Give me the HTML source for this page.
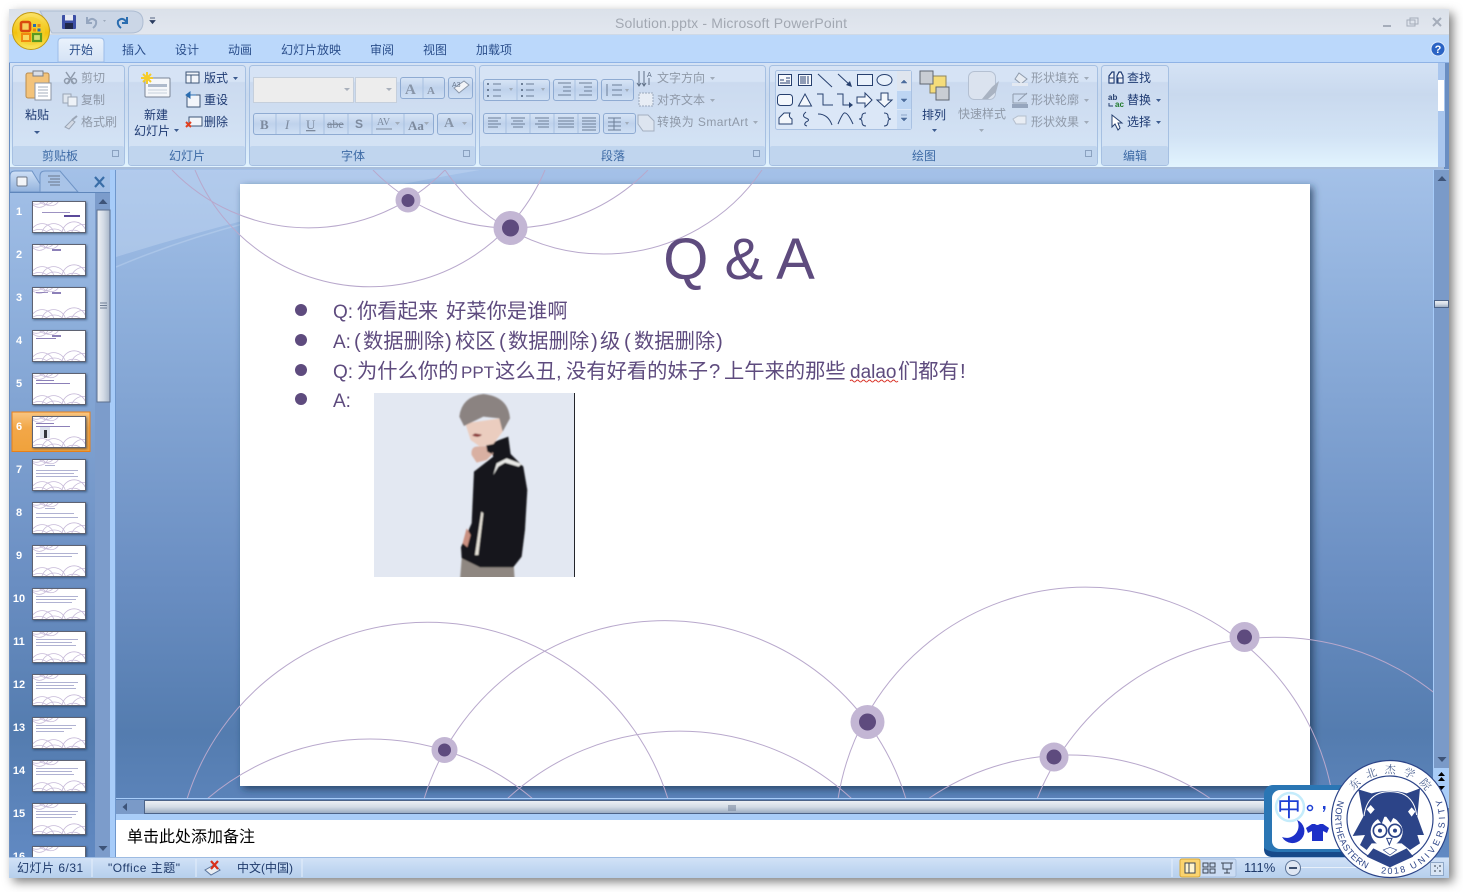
<!DOCTYPE html>
<html lang="zh"><head><meta charset="utf-8"><title>Solution.pptx - Microsoft PowerPoint</title>
<style>
html,body{margin:0;padding:0;width:1463px;height:892px;overflow:hidden;background:#fff}
svg{display:block}
text{font-family:"Liberation Sans","Noto Sans CJK SC",sans-serif;white-space:pre}
.d{font-size:12px;fill:#1e3a72}
.g{font-size:12px;fill:#8f99a8}
.l{font-size:12px;fill:#3d6aa5;text-anchor:middle}
.t{font-size:12px;fill:#2b4f8c}
.n{font-size:11px;font-weight:bold;fill:#fff;text-anchor:middle}
.s{font-size:20.300px;fill:#5e4b7e}
.st{font-size:12px;fill:#1f3a6b}
.arc{fill:none;stroke:#b8a8cc;stroke-width:1}
.sh{fill:none;stroke:#27406f;stroke-width:1}
</style></head><body>
<svg width="1463" height="892" viewBox="0 0 1463 892" xmlns="http://www.w3.org/2000/svg">
<defs>
<filter id="ws" x="-5%" y="-5%" width="110%" height="110%"><feDropShadow dx="4" dy="4" stdDeviation="5" flood-color="#000" flood-opacity=".5"/></filter>
<filter id="ss" x="-3%" y="-3%" width="106%" height="106%"><feDropShadow dx="3" dy="3" stdDeviation="4" flood-color="#1d3050" flood-opacity=".75"/></filter>
<filter id="ts" x="-10%" y="-10%" width="125%" height="125%"><feDropShadow dx="1" dy="1" stdDeviation="1" flood-color="#1d3050" flood-opacity=".6"/></filter>
<filter id="pb" x="-5%" y="-5%" width="110%" height="110%"><feGaussianBlur stdDeviation="2.500"/></filter>
<linearGradient id="tb" x1="0" y1="0" x2="0" y2="1"><stop offset="0" stop-color="#dbe1ea"/><stop offset="1" stop-color="#e2e7ef"/></linearGradient>
<linearGradient id="rb" x1="0" y1="0" x2="0" y2="1"><stop offset="0" stop-color="#d5e3f5"/><stop offset=".3" stop-color="#c9d9ee"/><stop offset=".7" stop-color="#d2e3f5"/><stop offset="1" stop-color="#e2f4fe"/></linearGradient>
<linearGradient id="gp" x1="0" y1="0" x2="0" y2="1"><stop offset="0" stop-color="#d6e3f5"/><stop offset=".16" stop-color="#d6e3f5"/><stop offset=".17" stop-color="#cbdaef"/><stop offset="1" stop-color="#d6e5f6"/></linearGradient>
<linearGradient id="tab" x1="0" y1="0" x2="0" y2="1"><stop offset="0" stop-color="#eaf2fc"/><stop offset="1" stop-color="#d5e3f5"/></linearGradient>
<linearGradient id="wk" x1="0" y1="0" x2="0" y2="1"><stop offset="0" stop-color="#a4c1e8"/><stop offset=".2" stop-color="#8fb0dc"/><stop offset=".6" stop-color="#6a8ec2"/><stop offset=".82" stop-color="#547caf"/><stop offset="1" stop-color="#6189c2"/></linearGradient>
<linearGradient id="sb" x1="0" y1="0" x2="0" y2="1"><stop offset="0" stop-color="#eef1f5"/><stop offset=".5" stop-color="#d3dbe5"/><stop offset="1" stop-color="#97a8bf"/></linearGradient>
<linearGradient id="sv" x1="0" y1="0" x2="1" y2="0"><stop offset="0" stop-color="#eef1f5"/><stop offset=".5" stop-color="#d3dbe5"/><stop offset="1" stop-color="#a7b6ca"/></linearGradient>
<linearGradient id="stb" x1="0" y1="0" x2="0" y2="1"><stop offset="0" stop-color="#d3e3f7"/><stop offset=".5" stop-color="#c3d8f2"/><stop offset="1" stop-color="#b6cfec"/></linearGradient>
<linearGradient id="or" x1="0" y1="0" x2="0" y2="1"><stop offset="0" stop-color="#f9c682"/><stop offset=".4" stop-color="#f2a748"/><stop offset="1" stop-color="#f0a23c"/></linearGradient>
<linearGradient id="btn" x1="0" y1="0" x2="0" y2="1"><stop offset="0" stop-color="#d8e5f6"/><stop offset=".5" stop-color="#bfd2ec"/><stop offset="1" stop-color="#d0e0f4"/></linearGradient>
<linearGradient id="gold" x1="0" y1="0" x2="0" y2="1"><stop offset="0" stop-color="#fbe36a"/><stop offset=".55" stop-color="#f2c20e"/><stop offset="1" stop-color="#fae65e"/></linearGradient>
<linearGradient id="tabl" x1="0" y1="0" x2="0" y2="1"><stop offset="0" stop-color="#cfe0f6"/><stop offset="1" stop-color="#93b3dd"/></linearGradient>
<clipPath id="wc"><rect x="116" y="170" width="1318" height="629"/></clipPath>
<clipPath id="pc"><rect x="9" y="192" width="86" height="665"/></clipPath>
<clipPath id="phc"><rect x="374" y="393" width="200" height="184"/></clipPath>
<symbol id="th" viewBox="0 0 1070 602">
<rect width="1070" height="602" fill="#fff"/>
<g fill="none" stroke="#c6b9d8" stroke-width="16">
<path d="M-60-14A190 190 0 0 0 205-14M-45-14A190 190 0 0 0 305-14M133-14A192 192 0 0 0 408-14M205-14A191 191 0 0 0 522-14"/>
<path d="M-53 615A252 252 0 0 1 428 615M184 615A252 252 0 0 1 666 615M-33 615A251 251 0 0 1 293 615M267 615A256 256 0 0 1 612 615M598 615A250 250 0 0 1 1093 615M797 615A256 256 0 0 1 1273 615M688 615A250 250 0 0 1 971 615"/>
</g>
</symbol>
</defs>

<!-- window -->
<rect x="9" y="9" width="1440" height="869" fill="#6a8ec2" filter="url(#ws)"/>
<!-- titlebar -->
<rect x="9" y="9" width="1440" height="26" fill="url(#tb)"/>
<rect x="9" y="34" width="1440" height="1" fill="#cfd9e6"/>
<rect x="9" y="35" width="1440" height="27" fill="#bbd8fb"/>
<rect x="9" y="62" width="1440" height="1" fill="#8fb3e6"/>
<!-- QAT -->
<path d="M40 11H131Q143 11 143 22T131 33H52Z" fill="#cbd6e6" stroke="#aebdd2"/>
<text x="615" y="28" textLength="232" lengthAdjust="spacing" style="font-size:14px;fill:#a2a8b2">Solution.pptx - Microsoft PowerPoint</text>
<!-- Office button -->
<circle cx="31" cy="31" r="18.500" fill="url(#gold)" stroke="#c39a12"/>
<circle cx="31" cy="31" r="14" fill="#f4cf30" opacity=".55"/>
<rect x="21" y="22" width="9" height="9" rx="1.500" fill="#f6d060" stroke="#d9480f" stroke-width="2.600"/>
<rect x="33" y="24" width="3" height="3" fill="#2a6db0"/><rect x="37.500" y="24" width="3" height="3" fill="#e68a10"/><rect x="33" y="28.500" width="3" height="3" fill="#e68a10"/><rect x="37.500" y="28.500" width="3" height="3" fill="#2a6db0"/>
<rect x="22" y="34" width="8" height="7" fill="#f8d860" stroke="#f08a10" stroke-width="2"/>
<rect x="33" y="34" width="8" height="7" fill="#cfe070" stroke="#5a9a20" stroke-width="2.200"/>
<!-- qat icons -->
<rect x="62" y="15" width="14" height="14" rx="1" fill="#3c4fa6"/><rect x="65" y="15" width="8" height="5.500" fill="#e7eaf2"/><rect x="65" y="23" width="8" height="6" fill="#20284a"/>
<path d="M87 17V23H92M87 23Q91 16 96 21Q97 25 93 28" fill="none" stroke="#95a6bf" stroke-width="2"/>
<path d="M103 20l3 0l-1.500 2z" fill="#9eabbd"/>
<path d="M127 17V23H122M127 23Q123 16 118 21Q117 25 121 28" fill="none" stroke="#2a6db0" stroke-width="2"/>
<path d="M150 18h5M150 20.500h5l-2.500 3z" fill="#2a3d60" stroke="#2a3d60" stroke-width=".8"/>
<!-- window buttons -->
<rect x="1383" y="25" width="8" height="2" fill="#a5adba"/>
<rect x="1407" y="20" width="8" height="6" fill="none" stroke="#a5adba"/><rect x="1410" y="18" width="8" height="6" fill="none" stroke="#a5adba"/>
<path d="M1433 18L1441 26M1441 18L1433 26" stroke="#a5adba" stroke-width="2"/>
<!-- tabs -->
<path d="M58 62V42Q58 38 62 38H100Q104 38 104 42V62Z" fill="url(#tab)" stroke="#9cbde8"/>
<text class="t" x="69" y="54">开始</text><text class="t" x="122" y="54">插入</text><text class="t" x="175" y="54">设计</text><text class="t" x="228" y="54">动画</text><text class="t" x="281" y="54">幻灯片放映</text><text class="t" x="370" y="54">审阅</text><text class="t" x="423" y="54">视图</text><text class="t" x="476" y="54">加载项</text>
<circle cx="1438" cy="49" r="7" fill="#2a63c4" stroke="#dce9fa"/><text x="1438" y="53" text-anchor="middle" style="font-size:11px;font-weight:bold;fill:#fff">?</text>

<!-- ribbon -->
<rect x="10" y="63" width="1434" height="105" fill="url(#rb)"/>
<rect x="10" y="167" width="1434" height="2" fill="#a9bedb"/>
<rect x="1438" y="63" width="7" height="104" fill="#a9c6ee"/><rect x="1438" y="80" width="6" height="31" fill="#fff"/>
<g fill="url(#gp)" stroke="#a6c0e2">
<rect x="12.500" y="65.500" width="112" height="100" rx="3"/>
<rect x="128.500" y="65.500" width="117" height="100" rx="3"/>
<rect x="249.500" y="65.500" width="226" height="100" rx="3"/>
<rect x="479.500" y="65.500" width="286" height="100" rx="3"/>
<rect x="769.500" y="65.500" width="328" height="100" rx="3"/>
<rect x="1101.500" y="65.500" width="67" height="100" rx="3"/>
</g>
<g fill="#c0d5ee">
<rect x="13" y="146" width="111" height="19" rx="2"/><rect x="129" y="146" width="116" height="19" rx="2"/><rect x="250" y="146" width="225" height="19" rx="2"/><rect x="480" y="146" width="285" height="19" rx="2"/><rect x="770" y="146" width="327" height="19" rx="2"/><rect x="1102" y="146" width="66" height="19" rx="2"/>
</g>
<text class="l" x="60" y="160">剪贴板</text><text class="l" x="187" y="160">幻灯片</text><text class="l" x="353" y="160">字体</text><text class="l" x="613" y="160">段落</text><text class="l" x="924" y="160">绘图</text><text class="l" x="1135" y="160">编辑</text>
<g fill="none" stroke="#8ba2c0"><rect x="112.500" y="150.500" width="6" height="6"/><rect x="463.500" y="150.500" width="6" height="6"/><rect x="753.500" y="150.500" width="6" height="6"/><rect x="1085.500" y="150.500" width="6" height="6"/></g>

<!-- clipboard -->
<rect x="26" y="73" width="23" height="25" rx="2" fill="#f3c37a" stroke="#b88c50"/>
<rect x="33" y="71" width="10" height="5" fill="#d9dee6" stroke="#7b7f88"/>
<path d="M35 83H51V100H35Z" fill="#fff" stroke="#8b95a5"/><path d="M38 87H48M38 90H48M38 93H48M38 96H48" stroke="#a6afbe"/>
<text class="d" x="25" y="119">粘贴</text><path d="M34 131h6l-3 3z" fill="#3c5b8f"/>
<path d="M66 72L74 84M75 72L67 84" stroke="#8f9bac" stroke-width="1.500"/><circle cx="67" cy="81" r="2.500" fill="none" stroke="#8f9bac" stroke-width="1.500"/><circle cx="74" cy="81" r="2.500" fill="none" stroke="#8f9bac" stroke-width="1.500"/>
<rect x="63" y="94" width="8" height="9" fill="#dfe6ef" stroke="#9aa5b5"/><rect x="68" y="97" width="9" height="9" fill="#eef2f7" stroke="#9aa5b5"/>
<path d="M65 127L72 120L75 122L69 129Z" fill="#d4dbe6" stroke="#9aa5b5"/><path d="M72 120L77 116" stroke="#9aa5b5" stroke-width="2"/>
<text class="g" x="81" y="82">剪切</text><text class="g" x="81" y="104">复制</text><text class="g" x="81" y="126">格式刷</text>
<!-- slides -->
<rect x="145" y="78" width="25" height="19" rx="1" fill="#f5f7fa" stroke="#7a8596"/><rect x="148" y="84" width="19" height="3" fill="#aebacb"/><path d="M148 90H167M148 93H167" stroke="#c7d0dc"/>
<path d="M147 72V84M141 78H153M143 74L151 82M151 74L143 82" stroke="#f5cc2a" stroke-width="2"/>
<text class="d" x="144" y="119">新建</text><text class="d" x="134" y="135">幻灯片</text><path d="M174 129h5l-2.500 3z" fill="#3c5b8f"/>
<rect x="186" y="72" width="13" height="11" fill="#f2f5fa" stroke="#3f5678"/><path d="M186 75H199M191 75V83" stroke="#3f5678"/>
<text class="d" x="204" y="82">版式</text><path d="M233 77h5l-2.500 3z" fill="#3c5b8f"/>
<rect x="187" y="95" width="13" height="12" fill="#f2f5fa" stroke="#3f5678"/><path d="M186 95L190 92V98ZM190 95H196" fill="#2a6db0" stroke="#2a6db0"/>
<text class="d" x="204" y="104">重设</text>
<rect x="189" y="117" width="13" height="9" fill="#f2f5fa" stroke="#3f5678"/><path d="M186 122L191 127M191 122L186 127" stroke="#e04020" stroke-width="2"/>
<text class="d" x="204" y="126">删除</text>
<!-- font -->
<rect x="253.500" y="77.500" width="100" height="25" fill="#ededed" stroke="#c5cfdc"/><rect x="355.500" y="77.500" width="41" height="25" fill="#ededed" stroke="#c5cfdc"/>
<path d="M344 88h6l-3 3zM386 88h6l-3 3z" fill="#a9b0bb"/>
<g fill="url(#btn)" stroke="#8fabd2"><rect x="400.500" y="77.500" width="44" height="21" rx="2.500"/><rect x="448.500" y="77.500" width="24" height="21" rx="2.500"/><rect x="253.500" y="113.500" width="180" height="21" rx="2.500"/><rect x="437.500" y="113.500" width="35" height="21" rx="2.500"/></g>
<path d="M423 78V98M276 114V134M300 114V134M324 114V134M348 114V134M372 114V134M404 114V134" stroke="#a8c0e0"/>
<text x="405" y="94" style="font-family:'Liberation Serif',serif;font-weight:bold;font-size:15px" fill="#8895a8">A</text><text x="427" y="94" style="font-family:'Liberation Serif',serif;font-weight:bold;font-size:11px" fill="#8895a8">A</text>
<text x="260" y="129" style="font-family:'Liberation Serif',serif;font-weight:bold;font-size:13px" fill="#7d8a9e">B</text><text x="285" y="129" style="font-family:'Liberation Serif',serif;font-style:italic;font-size:13px" fill="#7d8a9e">I</text><text x="306" y="129" style="font-family:'Liberation Serif',serif;font-size:13px;text-decoration:underline" fill="#7d8a9e">U</text><text x="327" y="128" style="font-family:'Liberation Serif',serif;font-size:12px;text-decoration:line-through" fill="#7d8a9e">abe</text><text x="355" y="128" style="font-family:'Liberation Sans',sans-serif;font-weight:bold;font-size:12px" fill="#7d8a9e">S</text><text x="377" y="125" style="font-family:'Liberation Serif',serif;font-size:10px" fill="#7d8a9e">AV</text><text x="408" y="130" style="font-family:'Liberation Serif',serif;font-weight:bold;font-size:13px" fill="#7d8a9e">Aa</text><text x="444" y="127" style="font-family:'Liberation Serif',serif;font-weight:bold;font-size:14px" fill="#8895a8">A</text>
<path d="M376 129H392" stroke="#7d8a9e"/><path d="M395 122h5l-2.500 3zM424 122h5l-2.500 3zM462 122h5l-2.500 3z" fill="#a0abb9"/>
<path d="M454 88L464 81L469 85L459 93Z" fill="#f2f4f8" stroke="#8a97aa"/>
<text x="452" y="87" style="font-size:7px" fill="#6b7a90">A3</text>
<!-- paragraph -->
<g fill="url(#btn)" stroke="#8fabd2"><rect x="483.500" y="79.500" width="66" height="21" rx="2.500"/><rect x="553.500" y="79.500" width="44" height="21" rx="2.500"/><rect x="601.500" y="79.500" width="32" height="21" rx="2.500"/><rect x="483.500" y="113.500" width="116" height="20" rx="2.500"/><rect x="603.500" y="113.500" width="32" height="20" rx="2.500"/></g>
<path d="M517 80V100M575 80V100M506 114V133M530 114V133M554 114V133M578 114V133" stroke="#a8c0e0"/>
<g stroke="#6c7e97" fill="none">
<path d="M493 84H501M493 90H501M493 96H501M526 84H534M526 90H534M526 96H534"/>
<path d="M487 84h2M487 90h2M487 96h2M521 84h2M521 90h2M521 96h2" stroke-width="2"/>
<path d="M558 83H571M563 87H571M563 91H571M558 95H571M579 83H592M584 87H592M584 91H592M579 95H592"/>
<path d="M612 85H622M612 90H622M612 95H622M607 84V96"/>
<path d="M488 118H501M488 121H498M488 124H501M488 127H498M511 118H525M513 121H523M511 124H525M513 127H523M535 118H549M538 121H549M535 124H549M538 127H549M558 118H574M558 121H574M558 124H574M558 127H574M582 118H596M582 121H596M582 124H596M582 127H596M582 130H596"/>
<path d="M608 118H621M608 122H621M608 126H621M608 130H621M614 118V130"/>
</g>
<path d="M509 88h4l-2 3zM541 88h4l-2 3zM625 89h4l-2 3zM625 122h4l-2 3z" fill="#a0abb9"/>
<path d="M639 71V85M644 71V85M649 78V85M637 83L639 86L641 83M642 83L644 86L646 83" fill="none" stroke="#5f6f86"/>
<text x="647" y="77" style="font-size:7px;fill:#5f6f86">A</text>
<text class="g" x="657" y="82">文字方向</text><path d="M710 77h5l-2.500 3z" fill="#a0abb9"/>
<rect x="639" y="93" width="14" height="13" fill="#e7edf5" stroke="#9aa8bb" stroke-dasharray="2 1"/>
<text class="g" x="657" y="104">对齐文本</text><path d="M710 99h5l-2.500 3z" fill="#a0abb9"/>
<path d="M638 115H648L654 121V131H643L638 124Z" fill="#dde5f0" stroke="#a4afc0"/>
<text class="g" x="657" y="126" textLength="91" lengthAdjust="spacing">转换为 SmartArt</text><path d="M753 121h5l-2.500 3z" fill="#a0abb9"/>
<!-- draw gallery -->
<rect x="775.500" y="70.500" width="136" height="59" rx="2" fill="#dbe7f7" stroke="#a9c1e2"/>
<rect x="897" y="71" width="14" height="19" fill="#dfe5ee"/><rect x="897" y="91" width="14" height="18" fill="#bdd5f3"/><rect x="897" y="110" width="14" height="19" fill="#c9dcf4"/>
<path d="M901 83l3-3l3 3zM901 99h6l-3 3zM901 115h6M901 118h6l-3 3z" fill="#4c6c9c" stroke="#4c6c9c" stroke-width=".5"/>
<g class="sh">
<rect x="778.500" y="74.500" width="13" height="11" fill="#f7f9fc" stroke="#27406f"/><path d="M780 80H784M786 78H790M786 81H790M780 83H790" stroke="#27406f" fill="none"/>
<rect x="798.500" y="74.500" width="13" height="11" fill="#f7f9fc" stroke="#27406f"/><path d="M801 76V84M803 76V84M805 76V84M808 76V84" stroke="#27406f" fill="none"/>
<path d="M818 74L832 87" stroke="#27406f" fill="none"/><path d="M838 74L851 86" stroke="#27406f" fill="none"/><path d="M852 87L846 85L850 81Z" fill="#27406f" stroke="none"/>
<rect x="857.500" y="74.500" width="15" height="11" fill="#e9f1fb" stroke="#27406f"/><ellipse cx="884.500" cy="80" rx="7.500" ry="5.500" fill="#e9f1fb" stroke="#27406f"/>
<rect x="777.500" y="94.500" width="15" height="11" rx="3" fill="#f3f7fc" stroke="#27406f"/>
<path d="M805 94L811.500 106H798.500Z" fill="#f3f7fc" stroke="#27406f"/>
<path d="M817 94H823V105H833" fill="none" stroke="#27406f"/><path d="M837 94H843V105H851" fill="none" stroke="#27406f"/><path d="M853 105L849 102V108Z" fill="#27406f" stroke="none"/>
<path d="M857 97H865V93L872 100L865 107V103H857Z" fill="#f3f7fc" stroke="#27406f"/>
<path d="M881 93H888V100H892L884.500 107L877 100H881Z" fill="#f3f7fc" stroke="#27406f"/>
<path d="M779 124V118L784 113H790Q788 117 792 119V124Z" fill="#f3f7fc" stroke="#27406f"/>
<path d="M806 112Q801 116 806 118Q811 120 806 122Q803 125 807 126" fill="none" stroke="#27406f"/>
<path d="M818 114Q828 114 832 125" fill="none" stroke="#27406f"/><path d="M838 124Q843 112 845 113Q848 113 853 124" fill="none" stroke="#27406f"/>
<path d="M866 113Q862 113 862 116Q862 119 859 119Q862 119 862 122Q862 126 866 126M884 113Q888 113 888 116Q888 119 891 119Q888 119 888 122Q888 126 884 126" fill="none" stroke="#27406f"/>
</g>
<!-- arrange -->
<rect x="930" y="76" width="16" height="17" fill="#f5dc7a" stroke="#8d8460"/>
<rect x="920" y="71" width="13" height="13" fill="#c9cdd3" stroke="#5f6672"/><rect x="936" y="87" width="13" height="13" fill="#c9cdd3" stroke="#5f6672"/>
<text class="d" x="922" y="119">排列</text><path d="M932 129h5l-2.500 3z" fill="#3c5b8f"/>
<rect x="968.500" y="71.500" width="27" height="28" rx="6" fill="#dbe3ef" stroke="#b4c0d2"/><path d="M982 99L992 87L999 81L996 92L988 99Z" fill="#a9b3c2"/>
<text class="g" x="958" y="118">快速样式</text><path d="M979 129h5l-2.500 3z" fill="#a0abb9"/>
<path d="M1019 73L1027 79L1021 84L1015 79Z" fill="#e6ebf2" stroke="#8f9bac"/><rect x="1012" y="83" width="16" height="3" fill="#e3e9f2"/>
<text class="g" x="1031" y="82">形状填充</text><path d="M1084 77h5l-2.500 3z" fill="#a0abb9"/>
<path d="M1013 94H1027M1013 94V103H1027" fill="none" stroke="#8f9bac"/><path d="M1018 101L1027 93" stroke="#8f9bac"/><rect x="1012" y="104" width="16" height="4" fill="#95a5bd"/>
<text class="g" x="1031" y="104">形状轮廓</text><path d="M1084 99h5l-2.500 3z" fill="#a0abb9"/>
<path d="M1013 119L1018 116H1026V124H1016Z" fill="#e8edf4" stroke="#b5bfcd"/>
<text class="g" x="1031" y="126">形状效果</text><path d="M1084 121h5l-2.500 3z" fill="#a0abb9"/>
<!-- edit -->
<path d="M1109 83V76L1112 72H1114V83ZM1117 83V76L1119 72H1121L1123 76V83Z" fill="#f0f3f8" stroke="#1e3a72" stroke-width="1.200"/>
<rect x="1109" y="78" width="5" height="5" fill="#f0f3f8" stroke="#1e3a72"/><rect x="1118" y="78" width="5" height="5" fill="#f0f3f8" stroke="#1e3a72"/>
<text class="d" x="1127" y="82">查找</text>
<text x="1108" y="100" style="font-size:8px;font-weight:bold;fill:#27406f">ab</text><text x="1115" y="107" style="font-size:8px;font-weight:bold;fill:#1f7a2a">ac</text><path d="M1109 103V106H1113" fill="none" stroke="#27406f"/>
<text class="d" x="1127" y="104">替换</text><path d="M1156 99h5l-2.500 3z" fill="#3c5b8f"/>
<path d="M1112 115V127L1115 124L1118 130L1120 128L1118 123H1122Z" fill="#fff" stroke="#27406f"/>
<text class="d" x="1127" y="126">选择</text><path d="M1156 121h5l-2.500 3z" fill="#3c5b8f"/>

<!-- workspace -->
<rect x="10" y="169" width="1439" height="688" fill="url(#wk)"/>
<path d="M116 170H480Q300 200 116 257Z" fill="#c6d9f2" opacity=".42"/>
<path d="M116 267Q180 240 250 222" fill="none" stroke="#c6d9f2" stroke-width="1.500" opacity=".4"/>
<!-- slide -->
<rect x="240" y="184" width="1070" height="602" fill="#fff" filter="url(#ss)"/>
<g clip-path="url(#wc)">
<path class="arc" d="M172 170A190 190 0 0 0 445 170M195 170A189.500 189.500 0 0 0 545 170M373 170A192 192 0 0 0 648 170M445 170A191.500 191.500 0 0 0 762 170"/>
<path class="arc" d="M187 799A252 252 0 0 1 668 799M424 799A252 252 0 0 1 906 799M207 799A251.500 251.500 0 0 1 533 799M507 799A253 253 0 0 1 852 799M838 799A250.500 250.500 0 0 1 1333 799M1037 799A256 256 0 0 1 1513 799M928 799A249.500 249.500 0 0 1 1211 799"/>
</g>
<g fill="#c3b6d4"><circle cx="408" cy="200" r="12.500"/><circle cx="510.500" cy="228" r="17"/><circle cx="444.500" cy="750" r="13"/><circle cx="867.500" cy="722" r="17"/><circle cx="1054" cy="757" r="14.500"/><circle cx="1244.500" cy="637" r="15"/></g>
<g fill="#5e4b7e"><circle cx="408" cy="200.500" r="6.500"/><circle cx="510.500" cy="228" r="8.500"/><circle cx="444.500" cy="750" r="6.500"/><circle cx="867.500" cy="722" r="8.500"/><circle cx="1054" cy="757" r="7.500"/><circle cx="1244.500" cy="637" r="7.500"/>
<circle cx="301" cy="310" r="6"/><circle cx="301" cy="340" r="6"/><circle cx="301" cy="370" r="6"/><circle cx="301" cy="399" r="6"/></g>
<text x="739" y="279" text-anchor="middle" style="font-size:58px;fill:#5e4b7e">Q &amp; A</text>
<text class="s" y="318"><tspan x="333" style="font-size:19px">Q:</tspan><tspan x="357">你看起来</tspan><tspan x="446">好菜你是谁啊</tspan></text>
<text class="s" y="348"><tspan x="333" style="font-size:19px">A:</tspan><tspan x="354">(</tspan><tspan x="363">数据删除</tspan><tspan x="445">)</tspan><tspan x="455">校区</tspan><tspan x="499">(</tspan><tspan x="508">数据删除</tspan><tspan x="591">)</tspan><tspan x="600">级</tspan><tspan x="624">(</tspan><tspan x="634">数据删除</tspan><tspan x="716">)</tspan></text>
<text class="s" y="378"><tspan x="333" style="font-size:19px">Q:</tspan><tspan x="357">为什么你的</tspan><tspan x="461" style="font-size:17px">PPT</tspan><tspan x="495">这么丑</tspan><tspan x="556">,</tspan><tspan x="566">没有好看的妹子</tspan><tspan x="709">?</tspan><tspan x="724">上午来的那些</tspan><tspan x="850" style="font-size:19px">dalao</tspan><tspan x="898">们都有</tspan><tspan x="960">!</tspan></text>
<text class="s" y="407" style="font-size:19px" x="333">A:</text>
<path d="M850 381q1.500-2 3 0t3 0t3 0t3 0t3 0t3 0t3 0t3 0t3 0t3 0t3 0t3 0t3 0t3 0t3 0t3 0" fill="none" stroke="#d93025"/>
<!-- photo -->
<rect x="374" y="393" width="200" height="184" fill="#e3e8f2"/>
<g clip-path="url(#phc)">
<g transform="translate(280 290) scale(.3333)" filter="url(#pb)">
<path d="M545 806L700 806L704 870H540Z" fill="#8f8781"/>
<path d="M625 462L685 440L692 492L730 530L742 600L735 720L725 800L700 832L600 832L545 805L543 772L575 700L582 545L640 500Z" fill="#15171c"/>
<path d="M640 555L650 520L680 505L725 522L716 530L675 518L655 530Z" fill="#e9e9e6"/>
<path d="M604 665L585 795L595 795L610 670Z" fill="#e6e2d8"/>
<path d="M575 495Q572 474 588 470L620 468L640 490L620 510L590 518Z" fill="#d9b0a2"/>
<path d="M618 462L640 462L636 492L622 485Z" fill="#15171c"/>
<path d="M548 760L560 715L572 735L562 772Z" fill="#c98f80"/>
<path d="M556 400L660 385L668 425L640 462L600 470L572 450Z" fill="#ebcdbf"/>
<path d="M538 380Q545 320 610 312Q685 320 690 385L668 425L658 385L610 380L552 408Z" fill="#8b8381"/>
<path d="M576 436Q596 446 606 434L585 430Z" fill="#8c3a3a"/>
</g>
</g>
<rect x="574" y="393" width="1" height="184" fill="#23252b"/>

<!-- left panel -->
<path d="M10 192V176Q10 171 15 171H32L45 192Z" fill="url(#tabl)" stroke="#6f94c6"/>
<path d="M40 192V176Q40 171 45 171H60L78 192Z" fill="#a9c4e8" stroke="#6f94c6"/>
<rect x="17" y="177" width="10" height="9" rx="1" fill="#f3f5f8" stroke="#6c7687"/>
<path d="M48 176H60M50 179H60M48 182H60M50 185H60" stroke="#69768a"/>
<path d="M95 177L104 187M104 177L95 187" stroke="#3a6ea8" stroke-width="2.200"/>
<rect x="10" y="192" width="100" height="1" fill="#5f86bb"/>
<rect x="110" y="170" width="6" height="687" fill="#a7ccf9"/><rect x="115" y="170" width="1" height="687" fill="#6f97cc"/>
<rect x="95" y="193" width="15" height="664" fill="#7c9ccb"/>
<path d="M98.500 204L103 199L107.500 204Z" fill="#3d5378"/>
<rect x="97" y="210" width="13" height="192" fill="url(#sv)" stroke="#5b6f8f"/>
<path d="M100 303H107M100 305.500H107M100 308H107" stroke="#6f7e95"/>
<path d="M98.500 846H107.500L103 851Z" fill="#3d5378"/>
<rect x="12" y="412" width="78" height="39.500" fill="url(#or)" stroke="#e8801a"/>
<g clip-path="url(#pc)">
<g filter="url(#ts)" stroke="#5e6472" stroke-width="1">
<rect x="32.500" y="201.500" width="53" height="31" fill="#fff"/><rect x="32.500" y="244.500" width="53" height="31" fill="#fff"/><rect x="32.500" y="287.500" width="53" height="31" fill="#fff"/><rect x="32.500" y="330.500" width="53" height="31" fill="#fff"/><rect x="32.500" y="373.500" width="53" height="31" fill="#fff"/><rect x="32.500" y="416.500" width="53" height="31" fill="#fff"/><rect x="32.500" y="459.500" width="53" height="31" fill="#fff"/><rect x="32.500" y="502.500" width="53" height="31" fill="#fff"/><rect x="32.500" y="545.500" width="53" height="31" fill="#fff"/><rect x="32.500" y="588.500" width="53" height="31" fill="#fff"/><rect x="32.500" y="631.500" width="53" height="31" fill="#fff"/><rect x="32.500" y="674.500" width="53" height="31" fill="#fff"/><rect x="32.500" y="717.500" width="53" height="31" fill="#fff"/><rect x="32.500" y="760.500" width="53" height="31" fill="#fff"/><rect x="32.500" y="803.500" width="53" height="31" fill="#fff"/><rect x="32.500" y="846.500" width="53" height="31" fill="#fff"/>
</g>
<use href="#th" x="33" y="202" width="52" height="30"/><use href="#th" x="33" y="245" width="52" height="30"/><use href="#th" x="33" y="288" width="52" height="30"/><use href="#th" x="33" y="331" width="52" height="30"/><use href="#th" x="33" y="374" width="52" height="30"/><use href="#th" x="33" y="417" width="52" height="30"/><use href="#th" x="33" y="460" width="52" height="30"/><use href="#th" x="33" y="503" width="52" height="30"/><use href="#th" x="33" y="546" width="52" height="30"/><use href="#th" x="33" y="589" width="52" height="30"/><use href="#th" x="33" y="632" width="52" height="30"/><use href="#th" x="33" y="675" width="52" height="30"/><use href="#th" x="33" y="718" width="52" height="30"/><use href="#th" x="33" y="761" width="52" height="30"/><use href="#th" x="33" y="804" width="52" height="30"/><use href="#th" x="33" y="847" width="52" height="30"/>
<g fill="#5b4a9a">
<rect x="42" y="212" width="28" height="1" opacity=".6"/><rect x="64" y="215" width="16" height="2"/>
<rect x="52" y="249" width="9" height="2" opacity=".7"/><rect x="52" y="292" width="9" height="2" opacity=".7"/><rect x="52" y="335" width="9" height="2" opacity=".7"/>
<rect x="36" y="292" width="12" height="1" opacity=".6"/><rect x="36" y="338" width="20" height="1" opacity=".7"/><rect x="36" y="380" width="18" height="1" opacity=".7"/><rect x="36" y="383" width="34" height="1" opacity=".7"/>
<rect x="36" y="423" width="18" height="1" opacity=".7"/><rect x="36" y="426" width="34" height="1" opacity=".7"/>
</g>
<g fill="#8f92c0" opacity=".7">
<rect x="45" y="465" width="10" height="1"/><rect x="36" y="470" width="42" height="1"/><rect x="36" y="473" width="38" height="1"/><rect x="36" y="476" width="42" height="1"/>
<rect x="45" y="508" width="10" height="1"/><rect x="36" y="513" width="38" height="1"/><rect x="36" y="517" width="42" height="1"/>
<rect x="36" y="553" width="42" height="1"/><rect x="36" y="556" width="36" height="1"/>
<rect x="36" y="596" width="42" height="1"/><rect x="36" y="599" width="40" height="1"/><rect x="36" y="602" width="36" height="1"/>
<rect x="36" y="639" width="42" height="1"/><rect x="36" y="642" width="36" height="1"/><rect x="36" y="645" width="40" height="1"/>
<rect x="36" y="682" width="42" height="1"/><rect x="36" y="685" width="38" height="1"/><rect x="36" y="688" width="40" height="1"/>
<rect x="36" y="725" width="40" height="1"/><rect x="36" y="728" width="36" height="1"/><rect x="36" y="731" width="28" height="1"/>
<rect x="36" y="768" width="42" height="1"/><rect x="36" y="771" width="36" height="1"/><rect x="36" y="774" width="38" height="1"/>
<rect x="36" y="811" width="42" height="1"/><rect x="36" y="814" width="40" height="1"/><rect x="36" y="817" width="36" height="1"/>
</g>
<rect x="40" y="427" width="10" height="11" fill="#dfe4ee"/><rect x="44" y="430" width="3" height="8" fill="#15171c" opacity=".85"/>
<text class="n" x="19" y="215">1</text><text class="n" x="19" y="258">2</text><text class="n" x="19" y="301">3</text><text class="n" x="19" y="344">4</text><text class="n" x="19" y="387">5</text><text class="n" x="19" y="430">6</text><text class="n" x="19" y="473">7</text><text class="n" x="19" y="516">8</text><text class="n" x="19" y="559">9</text><text class="n" x="19" y="602">10</text><text class="n" x="19" y="645">11</text><text class="n" x="19" y="688">12</text><text class="n" x="19" y="731">13</text><text class="n" x="19" y="774">14</text><text class="n" x="19" y="817">15</text><text class="n" x="19" y="860">16</text>
</g>

<!-- right scrollbar -->
<rect x="1433" y="170" width="1" height="630" fill="#a7ccf9"/>
<rect x="1434" y="170" width="15" height="598" fill="#7a9ac8"/>
<path d="M1437.500 181L1442 176L1446.500 181Z" fill="#3d5378"/>
<rect x="1434.500" y="300.500" width="14" height="7" fill="url(#sb)" stroke="#4c6388"/>
<path d="M1437.500 757H1446.500L1442 762Z" fill="#3d5378"/>
<rect x="1434" y="768" width="15" height="40" fill="#a9cdf8"/>
<path d="M1438 776L1441.500 772L1445 776ZM1438 781L1441.500 777L1445 781ZM1438 786L1441.500 790L1445 786Z" fill="#000"/>
<!-- hscroll -->
<rect x="116" y="798" width="1318" height="1" fill="#a7ccf9"/>
<rect x="116" y="800" width="1318" height="14" fill="#7a9ac8"/>
<path d="M127 803V811L122.500 807Z" fill="#3d5378"/>
<rect x="144.500" y="800.500" width="1120" height="13" fill="url(#sb)" stroke="#4c6388"/>
<path d="M729 805V811M731 805V811M733 805V811M735 805V811" stroke="#6f7e95"/>
<rect x="116" y="814" width="1333" height="6" fill="#a9cdf8"/>
<rect x="116" y="820" width="1318" height="37" fill="#fff"/>
<text x="127" y="842" style="font-size:16px;fill:#000">单击此处添加备注</text>
<!-- status bar -->
<rect x="9" y="857" width="1440" height="21" fill="url(#stb)"/>
<rect x="9" y="857" width="1440" height="1" fill="#9dbbe2"/>
<path d="M92 859V877M196 859V877M302 859V877M1172 859V877" stroke="#e4eefb"/>
<text class="st" x="17" y="872" style="letter-spacing:.5px">幻灯片 6/31</text><text class="st" x="108" y="872" style="letter-spacing:.5px">"Office 主题"</text><text class="st" x="237" y="872">中文(中国)</text>
<path d="M205 870L214 865L220 870L211 875Z" fill="#e8edf3" stroke="#59739a"/><path d="M211 861L218 869M218 861L211 869" stroke="#d9301c" stroke-width="2.200"/>
<rect x="1180" y="859" width="56" height="18" rx="2" fill="#cbdcf3" stroke="#a7bedd"/>
<rect x="1180" y="859" width="20" height="18" rx="2" fill="#fbd46e" stroke="#d8a93a"/>
<path d="M1185 863H1195V873H1185ZM1189 863V873" fill="#fff5cf" stroke="#3c4654"/>
<path d="M1203 863H1208V867H1203ZM1210 863H1215V867H1210ZM1203 869H1208V873H1203ZM1210 869H1215V873H1210Z" fill="none" stroke="#3c4654"/>
<path d="M1221 863H1233M1223 863V869H1231V863M1227 869V873M1224 873H1230" fill="none" stroke="#3c4654"/>
<text x="1244" y="872" style="font-size:13px;fill:#1f3a6b">111%</text>
<circle cx="1293" cy="868" r="7.500" fill="#dfe7f3" stroke="#5d7598"/><rect x="1289" y="867" width="8" height="2" fill="#3c5070"/>
<rect x="1301" y="867" width="60" height="1" fill="#e8f0fa"/>
<rect x="1430.500" y="862.500" width="13" height="13" fill="#d9e5f4" stroke="#8fa8c8"/><path d="M1434 866h2M1439 866h2M1434 871h2M1439 871h2M1437 868h1" stroke="#2f3a4a"/>

<!-- IME widget -->
<rect x="1264" y="785" width="90" height="72" rx="9" fill="#2a76b4"/>
<path d="M1264 848V849Q1264 857 1273 857H1354V852H1280Q1268 852 1264 848Z" fill="#174a8a"/>
<rect x="1272" y="790" width="90" height="59" rx="8" fill="#fff"/>
<circle cx="1290" cy="807" r="14" fill="none" stroke="#c5ecfb" stroke-width="2.500"/>
<text x="1289" y="816" text-anchor="middle" style="font-size:24px;fill:#1d3fd4">中</text>
<circle cx="1310" cy="808" r="2.500" fill="none" stroke="#1d3fd4" stroke-width="1.500"/>
<path d="M1323 806h2.500v3l-1.500 3h-1l1-3h-1z" fill="#1d3fd4"/>
<path d="M1295 822A12 12 0 1 1 1280 839A12 12 0 0 0 1295 822Z" fill="#1d30c8" transform="translate(2 -2)"/>
<path d="M1306 828L1312 824H1315Q1317 826 1320 824H1323L1329 828L1327 833L1323 831V841H1312V831L1308 833Z" fill="#1d30c8"/>

<!-- badge -->
<circle cx="1390" cy="819" r="58.500" fill="#fff" stroke="#2c4488" stroke-width="1.200"/>
<circle cx="1390" cy="819" r="43" fill="#fff" stroke="#2c4488" stroke-width="1.200"/>
<path id="bb" d="M1338.300 800.200A55 55 0 1 0 1441.700 800.200" fill="none"/>
<path id="bt" d="M1346 806A46 46 0 0 1 1434 806" fill="none"/>
<text style="font-size:9px;fill:#2c4488;letter-spacing:.6px"><textPath href="#bb" startOffset="0">NORTHEASTERN</textPath></text>
<text style="font-size:9px;fill:#2c4488;letter-spacing:1.800px"><textPath href="#bb" startOffset="96">2018</textPath></text>
<text style="font-size:9px;fill:#2c4488;letter-spacing:3.300px"><textPath href="#bb" startOffset="128">UNIVERSITY</textPath></text>
<text text-anchor="middle" style="font-size:11px;fill:#4a6090;letter-spacing:7px;font-family:'Noto Serif CJK SC',serif"><textPath href="#bt" startOffset="53%">东北杰学院</textPath></text>
<g transform="translate(1330 760) scale(.3333)">
<path d="M85 88L125 100Q180 85 230 100L270 85L262 170L282 225L262 225L270 250L240 270L215 250L125 250L110 270L90 255L105 225L68 228L100 170Z" fill="#2c4488"/>
<path d="M102 168Q112 95 180 95Q250 95 260 165" fill="none" stroke="#fff" stroke-width="3"/>
<path d="M122 135L134 148L122 162L110 148ZM245 142L256 155L245 170L234 155Z" fill="#fff"/>
<ellipse cx="170" cy="215" rx="48" ry="45" fill="#fff"/>
<path d="M120 205L138 170L155 192L165 165L182 188L192 170L215 198L222 170L170 150L122 172Z" fill="#2c4488"/>
<circle cx="150" cy="212" r="20" fill="#fff" stroke="#2c4488" stroke-width="5"/><circle cx="195" cy="212" r="19" fill="#fff" stroke="#2c4488" stroke-width="5"/><circle cx="150" cy="212" r="6" fill="#2c4488"/><circle cx="195" cy="212" r="6" fill="#2c4488"/>
<path d="M170 235H186L178 254Z" fill="#fff" stroke="#2c4488" stroke-width="3"/>
<path d="M130 265L180 290L230 265L250 290L180 322L110 290Z" fill="#2c4488"/>
<path d="M160 270L180 285L200 270L180 262Z" fill="#fff" stroke="#2c4488" stroke-width="2"/>
</g>
</svg>
</body></html>
